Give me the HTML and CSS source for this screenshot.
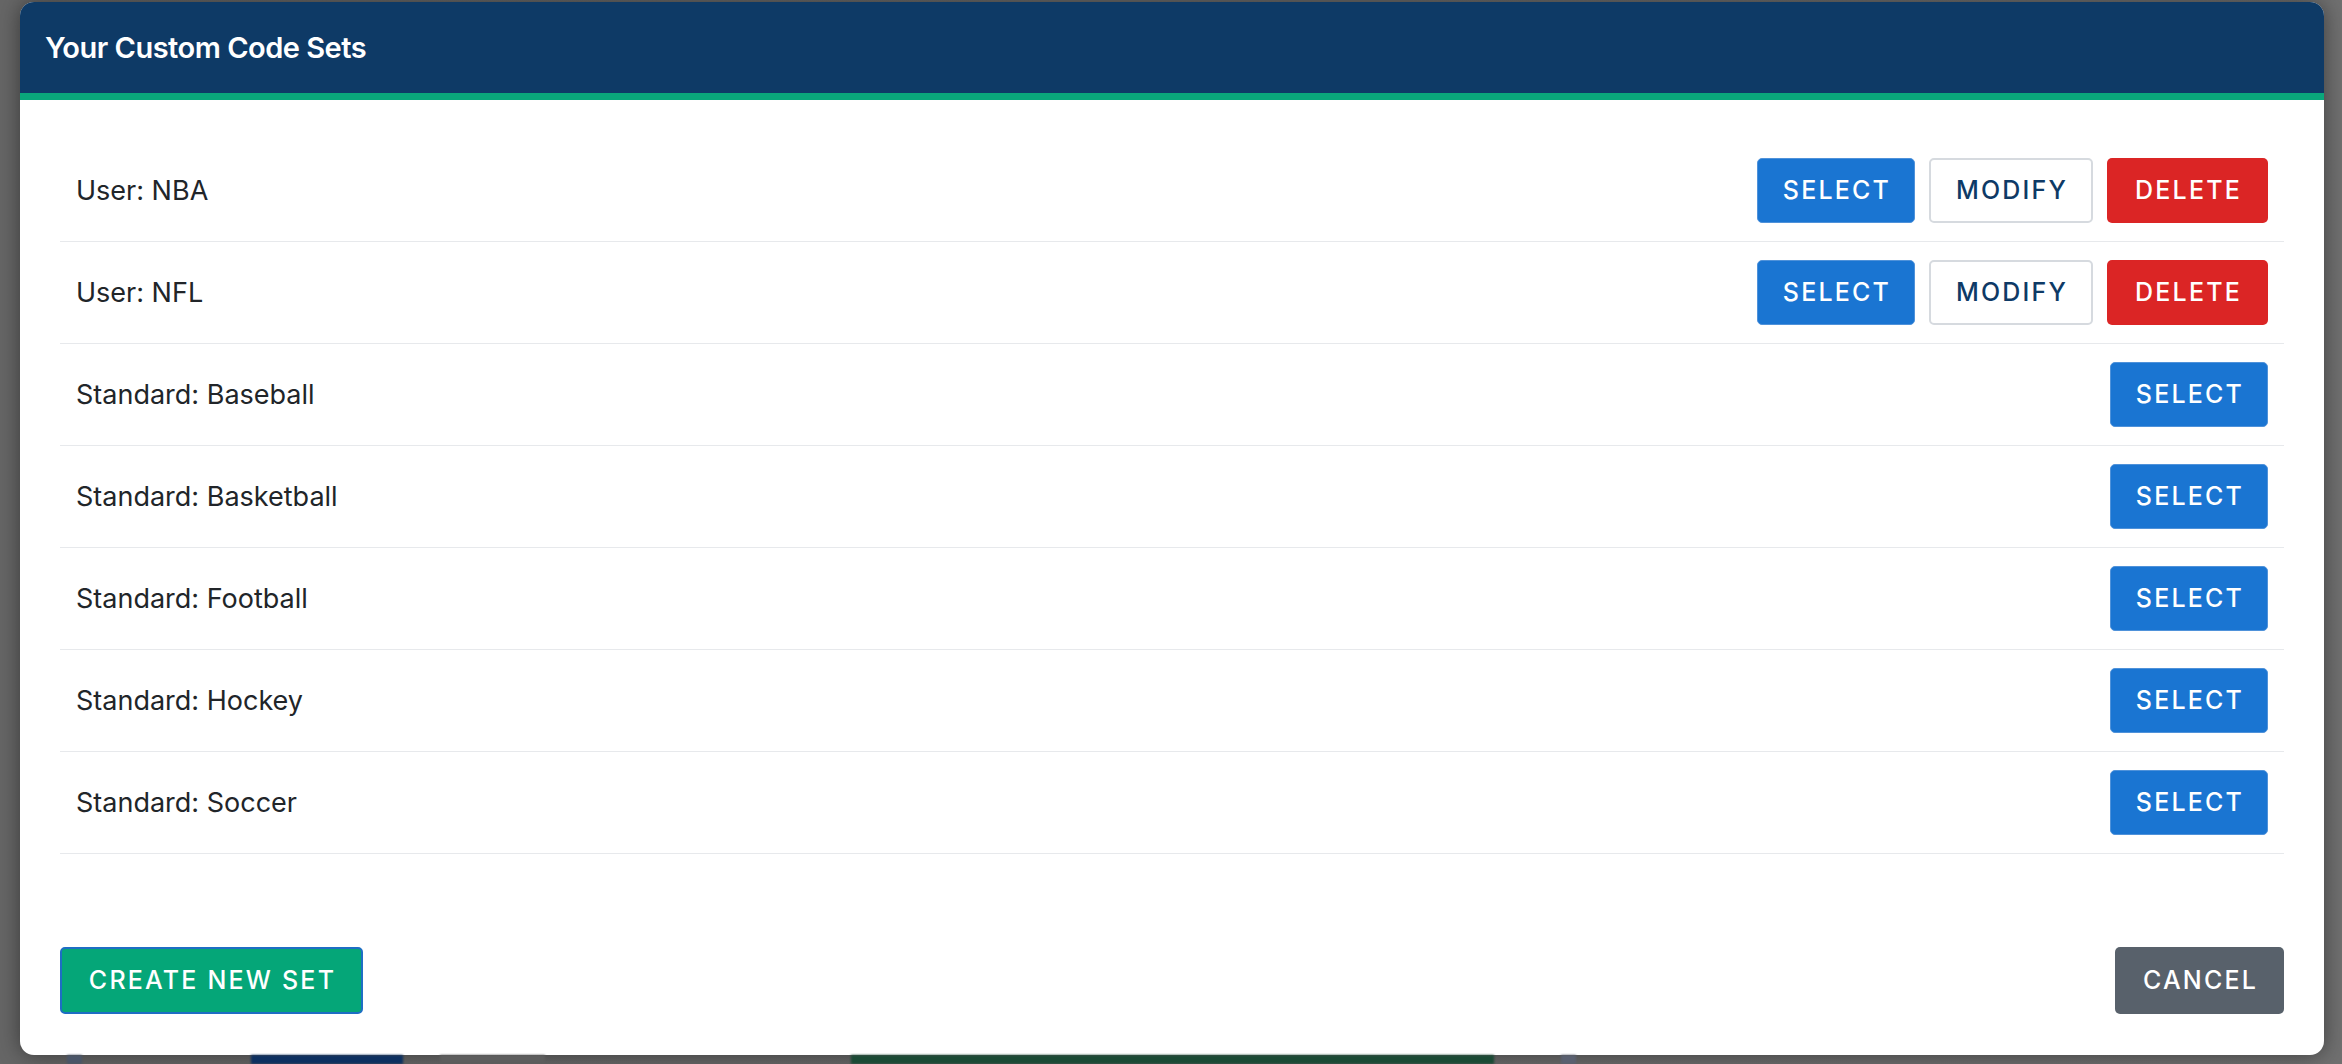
FILE: index.html
```html
<!DOCTYPE html>
<html lang="en">
<head>
<meta charset="utf-8">
<title>Your Custom Code Sets</title>
<link rel="stylesheet" href="styles.css">
</head>
<body>
<div class="stage">
  <div class="modal">
    <div class="modal-header">
      <h1 class="modal-title">Your Custom Code Sets</h1>
    </div>
    <div class="modal-body">
      <ul class="set-list">
        <li class="set-row">
          <span class="set-name">User: NBA</span>
          <div class="actions">
            <button class="btn btn-select">SELECT</button>
            <button class="btn btn-modify">MODIFY</button>
            <button class="btn btn-delete">DELETE</button>
          </div>
        </li>
        <li class="set-row">
          <span class="set-name">User: NFL</span>
          <div class="actions">
            <button class="btn btn-select">SELECT</button>
            <button class="btn btn-modify">MODIFY</button>
            <button class="btn btn-delete">DELETE</button>
          </div>
        </li>
        <li class="set-row">
          <span class="set-name">Standard: Baseball</span>
          <div class="actions"><button class="btn btn-select">SELECT</button></div>
        </li>
        <li class="set-row">
          <span class="set-name">Standard: Basketball</span>
          <div class="actions"><button class="btn btn-select">SELECT</button></div>
        </li>
        <li class="set-row">
          <span class="set-name">Standard: Football</span>
          <div class="actions"><button class="btn btn-select">SELECT</button></div>
        </li>
        <li class="set-row">
          <span class="set-name">Standard: Hockey</span>
          <div class="actions"><button class="btn btn-select">SELECT</button></div>
        </li>
        <li class="set-row">
          <span class="set-name">Standard: Soccer</span>
          <div class="actions"><button class="btn btn-select">SELECT</button></div>
        </li>
      </ul>
    </div>
    <div class="modal-footer">
      <button class="btn btn-lg btn-create">CREATE NEW SET</button>
      <button class="btn btn-lg btn-cancel">CANCEL</button>
    </div>
  </div>
  <div class="under-strip">
    <span class="ghost g1"></span>
    <span class="ghost g2"></span>
    <span class="ghost g3"></span>
    <span class="ghost g4"></span>
    <span class="ghost g5"></span>
  </div>
</div>
</body>
</html>
```

FILE: styles.css
```css
* { box-sizing: border-box; }

html, body {
  margin: 0;
  padding: 0;
  height: 100%;
}

body {
  background: linear-gradient(90deg, #666666 0%, #6a6a6a 60%, #707070 100%);
  font-family: Inter, "Noto Sans", "Liberation Sans", sans-serif;
  color: #212529;
  overflow: hidden;
}

.stage {
  display: flex;
  flex-direction: column;
  padding: 2px 18px 0 20px;
  height: 1064px;
}

.modal {
  background: #ffffff;
  border-radius: 14px;
  overflow: hidden;
  height: 1053px;
  display: flex;
  flex-direction: column;
  box-shadow: 0 0 22px rgba(0, 0, 0, 0.45);
}

.modal-header {
  height: 98px;
  background: #0e3a66;
  border-bottom: 7px solid #0aa77b;
  display: flex;
  align-items: center;
  padding: 0 0 0 25px;
}

.modal-title {
  margin: 0;
  color: #ffffff;
  font-family: Inter, "Liberation Sans", sans-serif;
  font-weight: 600;
  font-size: 29px;
  letter-spacing: -0.5px;
}

.modal-body {
  padding: 40px 40px 0;
}

.set-list {
  list-style: none;
  margin: 0;
  padding: 0;
}

.set-row {
  display: flex;
  align-items: center;
  justify-content: space-between;
  padding: 18px 16px;
  border-bottom: 1px solid #e7e9ec;
  height: 102px;
}

.set-name {
  font-size: 27px;
  font-weight: 400;
  color: #212529;
}

.actions {
  display: flex;
  gap: 14px;
}

.btn {
  font-family: Inter, "Liberation Sans", sans-serif;
  font-size: 25px;
  font-weight: 500;
  letter-spacing: 2.2px;
  height: 65px;
  padding: 0 20px 0 22px;
  border-radius: 5px;
  border: 1px solid transparent;
  cursor: pointer;
  line-height: 1;
}

.btn-select {
  background: #1a75d2;
  color: #ffffff;
  border-color: #4f92da;
  min-width: 158px;
}

.btn-modify {
  background: #ffffff;
  color: #0e3a66;
  border: 2px solid #d6dadf;
  min-width: 164px;
}

.btn-delete {
  background: #db2525;
  color: #ffffff;
  min-width: 161px;
}

.modal-footer {
  display: flex;
  justify-content: space-between;
  align-items: center;
  padding: 93px 40px 41px;
}

.btn-lg {
  height: 67px;
  padding: 0 23px 0 25px;
}

.btn-create {
  background: #05a678;
  color: #ffffff;
  border: 2px solid #1e6ec4;
  min-width: 303px;
}

.btn-cancel {
  background: #58616b;
  color: #ffffff;
  min-width: 169px;
}

.under-strip {
  display: flex;
  height: 9px;
  margin-left: -20px;
  filter: blur(1px);
}

.ghost { display: block; height: 9px; }
.g1 { width: 15px; margin-left: 67px; background: #4a5568; }
.g2 { width: 152px; margin-left: 169px; background: #0d3060; }
.g3 { width: 105px; margin-left: 37px; background: #5d5d5d; }
.g4 { width: 643px; margin-left: 306px; background: #1b4a35; }
.g5 { width: 15px; margin-left: 67px; background: #5a6070; }
```
